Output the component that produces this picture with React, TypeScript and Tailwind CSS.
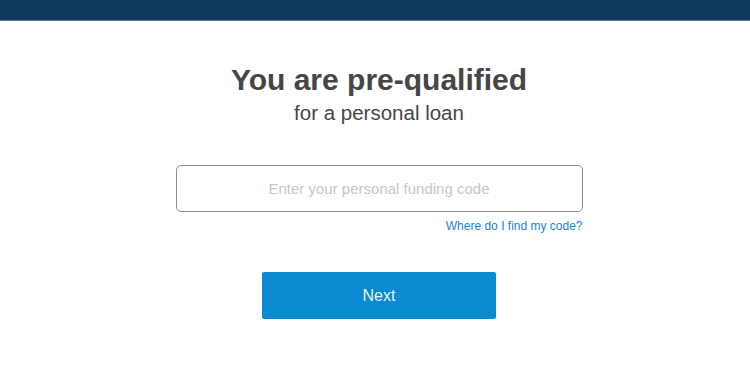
export default function App() {
  return (
    <div className="min-h-[365px] bg-white font-['Liberation_Sans',Arial,sans-serif]">
      <div className="h-[21px] bg-[#103a5e] border-b border-[#5d7a94]" />
      <div className="flex flex-col items-center pl-[8px]">
        <h1 className="mt-[41px] text-[30px] leading-[36px] font-bold text-[#464646]">
          You are pre-qualified
        </h1>
        <p className="mt-[3px] text-[20.5px] leading-[24px] text-[#464646]">for a personal loan</p>
        <div className="mt-[40px] w-[407px] flex flex-col">
          <input
            type="text"
            placeholder="Enter your personal funding code"
            className="h-[47px] w-full rounded-[5px] border border-[#8c8c8c] text-center text-[15px] text-[#333] placeholder:text-[#cfc5bb] outline-none"
          />
          <a href="#" className="mt-[7px] self-end text-[12px] leading-[14px] text-[#1b82d2]">
            Where do I find my code?
          </a>
        </div>
        <button
          type="button"
          className="mt-[39px] h-[47px] w-[234px] rounded-[2px] bg-[#0a8ad0] text-[16px] text-[#e8f4fb]"
        >
          Next
        </button>
      </div>
    </div>
  );
}
